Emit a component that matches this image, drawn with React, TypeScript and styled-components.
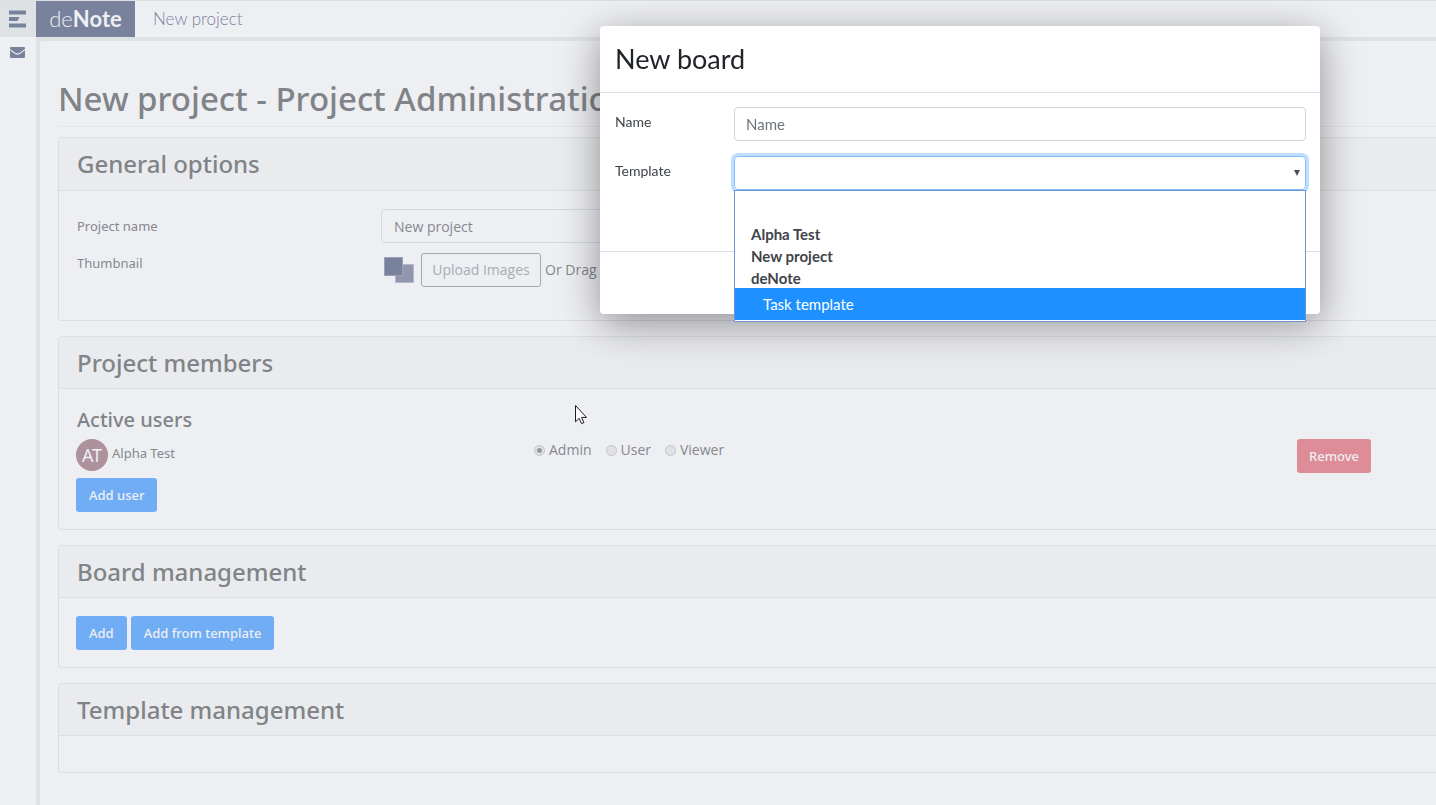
import React from "react";
import styled, { createGlobalStyle, css } from "styled-components";

const ui = '"Noto Sans", "Open Sans", sans-serif';
const control = '"Open Sans", "Noto Sans", sans-serif';
const brand = 'Lato, "Open Sans", sans-serif';

const color = {
  page: "#eeeff3",
  rail: "#dee2e5",
  brand: "#79829d",
  heading: "#808488",
  text: "#85888e",
  line: "#dcdee2",
  cardHead: "#eaebee",
  primary: "#70adf5",
  danger: "#de8c97",
};

const GlobalStyle = createGlobalStyle`
  *, *::before, *::after { box-sizing: border-box; }
  body {
    margin: 0;
    background: ${color.page};
    color: ${color.text};
    font-family: ${ui};
    font-size: 13px;
    line-height: 20px;
    overflow: hidden;
  }
  h1, h2, h3, p, ul { margin: 0; padding: 0; font-weight: 500; }
  ul { list-style: none; }
  button, input, select { font: inherit; color: inherit; margin: 0; }
`;

const Shell = styled.div`
  display: flex;
  flex-direction: column;
  min-height: 100vh;
  border-top: 1px solid ${color.line};
`;

const Header = styled.header`
  display: flex;
  height: 36px;
  font-family: ${brand};
`;

const MenuButton = styled.button`
  display: flex;
  align-items: center;
  width: 36px;
  padding: 0 0 0 9px;
  border: 0;
  background: ${color.rail};
`;

const Brand = styled.a`
  width: 99px;
  background: ${color.brand};
  color: ${color.page};
  font-size: 22px;
  font-weight: 300;
  line-height: 36px;
  text-align: center;
  text-decoration: none;
  b { font-weight: 700; }
`;

const ProjectLink = styled.a`
  padding-left: 18px;
  color: ${color.brand};
  font-size: 17px;
  font-weight: 300;
  line-height: 36px;
  text-decoration: none;
`;

const Body = styled.div`
  display: flex;
  flex: 1;
`;

const Sidebar = styled.nav`
  width: 36px;
  padding: 10px 0 0 10px;
`;

const Frame = styled.div`
  flex: 1;
  min-width: 0;
  padding: 4px 0 0 4px;
  background: ${color.rail};
`;

const Main = styled.main`
  display: flex;
  flex-direction: column;
  gap: 15px;
  height: 100%;
  padding: 36px 0 32px 18px;
  border-top-left-radius: 3px;
  background: ${color.page};
`;

const PageTitle = styled.h1`
  margin-bottom: -5px;
  padding-bottom: 5px;
  border-bottom: 1px solid #e4e5e9;
  color: ${color.heading};
  font-size: 33px;
  line-height: 44px;
  white-space: nowrap;
`;

const CardTitle = styled.h2`
  height: 52px;
  padding-left: 18px;
  border-bottom: 1px solid ${color.line};
  background: ${color.cardHead};
  color: ${color.heading};
  font-size: 24px;
  line-height: 52px;
`;

const Card = styled.section`
  border: 1px solid ${color.line};
  border-right: 0;
  border-top-left-radius: 4px;
  border-bottom-left-radius: 4px;
  &:first-of-type ${CardTitle} { height: 53px; }
`;

const CardBody = styled.div<{ $height: number }>`
  min-height: ${(p) => p.$height}px;
  padding: 18px 65px 0 17px;
`;

const FormRow = styled.div`
  display: grid;
  grid-template-columns: 305px minmax(0, 860px);
  align-items: start;
  margin-bottom: 10px;
`;

const RowLabel = styled.label<{ $centered?: boolean }>`
  padding-left: 1px;
  line-height: ${(p) => (p.$centered ? "34px" : "20px")};
`;

const fieldBox = css`
  width: 100%;
  height: 34px;
  padding: 0 12px;
  border: 1px solid #d5d8e0;
  border-radius: 4px;
  background: transparent;
`;

const ProjectInput = styled.input`
  ${fieldBox}
  font-family: ${control};
  font-size: 14px;
`;

const UploadRow = styled.div`
  display: flex;
  align-items: center;
  gap: 4px;
  padding-left: 3px;
  font-family: ${control};
  font-size: 14px;
  white-space: nowrap;
`;

const UploadButton = styled.button`
  height: 34px;
  width: 120px;
  margin-left: 3px;
  padding: 0;
  border: 1px solid #a3a9b1;
  border-radius: 3px;
  background: transparent;
  color: #a7acb4;
`;

const Button = styled.button<{ $danger?: boolean }>`
  height: 34px;
  padding: 0 ${(p) => (p.$danger ? 12 : 13)}px;
  border: 0;
  border-radius: 3px;
  background: ${(p) => (p.$danger ? color.danger : color.primary)};
  color: ${color.page};
  font-weight: 500;
`;

const ButtonRow = styled.div`
  display: flex;
  gap: 4px;
`;

const SubTitle = styled.h3`
  padding-left: 1px;
  color: ${color.heading};
  font-size: 20px;
  line-height: 26px;
  margin-bottom: 6px;
`;

const UserRow = styled.div`
  display: grid;
  grid-template-columns: 457px 1fr auto;
  align-items: start;
  height: 39px;
`;

const User = styled.div`
  display: flex;
  gap: 4px;
  line-height: 28px;
`;

const Avatar = styled.span`
  width: 32px;
  height: 32px;
  border-radius: 50%;
  background: #ad919b;
  color: ${color.page};
  font-size: 18px;
  line-height: 32px;
  text-align: center;
`;

const Roles = styled.div`
  display: flex;
  gap: 14px;
  padding: 1px 0 0 1px;
  font-family: ${control};
  font-size: 14px;
`;

const Role = styled.label`
  display: flex;
  align-items: center;
  gap: 4px;
`;

const Radio = styled.input`
  appearance: none;
  width: 11px;
  height: 11px;
  border: 1px solid #c3c4c8;
  border-radius: 50%;
  background: #e0e1e4;
  &:checked {
    background: radial-gradient(circle, #98999c 2px, #e0e1e4 3px);
  }
`;

const Overlay = styled.div`
  position: fixed;
  inset: 0;
  display: flex;
  justify-content: flex-end;
  align-items: flex-start;
  padding: 26px 116px 0 0;
`;

const Dialog = styled.section`
  width: 720px;
  max-width: 100%;
  border-radius: 4px;
  background: #fff;
  color: #3f444a;
  font-family: ${brand};
  box-shadow: 0 10px 40px rgba(0, 0, 0, 0.4);
`;

const DialogTitle = styled.h2`
  height: 67px;
  padding-left: 15px;
  border-bottom: 1px solid #dcdfe5;
  color: #212529;
  font-size: 27px;
  font-weight: 400;
  line-height: 66px;
`;

const DialogBody = styled.div`
  display: flex;
  flex-direction: column;
  gap: 15px;
  height: 159px;
  padding: 14px 14px 0 15px;
  border-bottom: 1px solid #dcdfe5;
`;

const DialogFooter = styled.footer`
  height: 62px;
`;

const Field = styled.div`
  display: grid;
  grid-template-columns: 119px 1fr;
  font-size: 14px;
  line-height: 30px;
`;

const NameInput = styled.input`
  ${fieldBox}
  border-color: #ced4da;
  font-size: 15px;
  padding: 0 11px;
  &::placeholder { color: #6c757d; opacity: 1; }
`;

const Picker = styled.div`
  position: relative;
`;

const Select = styled.select`
  ${fieldBox}
  display: block;
  appearance: none;
  border-color: #80bdff;
  box-shadow: 0 0 0 3px #bfdeff;
`;

const Caret = styled.svg`
  position: absolute;
  top: 14px;
  right: 6px;
`;

const Options = styled.ul`
  position: absolute;
  top: 34px;
  left: 0;
  right: 0;
  padding: 31px 0 1px;
  border: 1px solid #6f93d2;
  background: #fff;
`;

const Group = styled.li`
  height: 22px;
  padding: 1px 16px 0;
  font-size: 15px;
  font-weight: 700;
  line-height: 22px;
`;

const Option = styled.li`
  padding-left: 28px;
  background: #1e90ff;
  color: #fff;
  font-size: 15px;
  font-weight: 400;
  line-height: 32px;
`;

const Pointer = styled.svg`
  position: fixed;
  left: 575px;
  top: 405px;
`;

export default function App() {
  return (
    <>
      <GlobalStyle />
      <Shell>
        <Header>
          <MenuButton aria-label="Menu">
            <svg width="17" height="18" viewBox="0 0 17 18" fill={color.brand}>
              <path d="M0 0.500h17v4H0zM0 7h10.500l-2 4H0zM0 13.500h17v4H0z" />
            </svg>
          </MenuButton>
          <Brand href="#">
            de<b>Note</b>
          </Brand>
          <ProjectLink href="#">New project</ProjectLink>
        </Header>
        <Body>
          <Sidebar>
            <a href="#" aria-label="Messages">
              <svg width="15" height="11" viewBox="0 0 15 11" fill={color.brand} display="block">
                <path d="M1 0h13a1 1 0 0 1 1 1v0.600C13 4 9.500 6.500 7.500 6.500S2 4 0 1.600V1a1 1 0 0 1 1-1z" />
                <path d="M0 3c2.500 2.500 5.500 4.700 7.500 4.700S12.500 5.500 15 3v7a1 1 0 0 1-1 1H1a1 1 0 0 1-1-1z" />
              </svg>
            </a>
          </Sidebar>
          <Frame>
            <Main>
              <PageTitle>New project - Project Administration</PageTitle>
              <Card>
                <CardTitle>General options</CardTitle>
                <CardBody $height={129}>
                  <FormRow>
                    <RowLabel $centered htmlFor="project-name">
                      Project name
                    </RowLabel>
                    <ProjectInput id="project-name" defaultValue="New project" />
                  </FormRow>
                  <FormRow>
                    <RowLabel as="span">Thumbnail</RowLabel>
                    <UploadRow>
                      <svg width="30" height="26" viewBox="0 0 30 26">
                        <rect x="11.500" y="7.500" width="18" height="18" fill="#9097ad" stroke="#b5bac9" />
                        <rect x="0.500" y="0.500" width="18" height="18" fill="#79829d" stroke="#9ba2b6" />
                      </svg>
                      <UploadButton>Upload Images</UploadButton>
                      <span>Or Drag And Drop</span>
                    </UploadRow>
                  </FormRow>
                </CardBody>
              </Card>
              <Card>
                <CardTitle>Project members</CardTitle>
                <CardBody $height={140}>
                  <SubTitle>Active users</SubTitle>
                  <UserRow>
                    <User>
                      <Avatar>AT</Avatar>
                      <span>Alpha Test</span>
                    </User>
                    <Roles>
                      {["Admin", "User", "Viewer"].map((role) => (
                        <Role key={role}>
                          <Radio type="radio" name="role" defaultChecked={role === "Admin"} />
                          {role}
                        </Role>
                      ))}
                    </Roles>
                    <Button $danger>Remove</Button>
                  </UserRow>
                  <Button>Add user</Button>
                </CardBody>
              </Card>
              <Card>
                <CardTitle>Board management</CardTitle>
                <CardBody $height={69}>
                  <ButtonRow>
                    <Button>Add</Button>
                    <Button>Add from template</Button>
                  </ButtonRow>
                </CardBody>
              </Card>
              <Card>
                <CardTitle>Template management</CardTitle>
                <CardBody $height={36} />
              </Card>
            </Main>
          </Frame>
        </Body>
      </Shell>
      <Overlay>
        <Dialog role="dialog" aria-labelledby="dialog-title">
          <DialogTitle id="dialog-title">New board</DialogTitle>
          <DialogBody>
            <Field>
              <label htmlFor="board-name">Name</label>
              <NameInput id="board-name" placeholder="Name" />
            </Field>
            <Field>
              <label htmlFor="board-template">Template</label>
              <Picker>
                <Select id="board-template" defaultValue="">
                  <option value="" />
                </Select>
                <Caret width="6" height="6" viewBox="0 0 6 6" fill="#495057">
                  <path d="M0 0h6L3 6z" />
                </Caret>
                <Options role="listbox" aria-label="Template">
                  <Group>Alpha Test</Group>
                  <Group>New project</Group>
                  <Group>deNote</Group>
                  <Option role="option" aria-selected>
                    Task template
                  </Option>
                </Options>
              </Picker>
            </Field>
          </DialogBody>
          <DialogFooter />
        </Dialog>
      </Overlay>
      <Pointer width="12" height="20" viewBox="0 0 12 20">
        <path
          d="M0.500 0.500v16.300l3.700-3.500 2.400 5.300 2.300-1-2.300-5.200h4.900z"
          fill="#fff"
          stroke="#1b1b2b"
        />
      </Pointer>
    </>
  );
}
